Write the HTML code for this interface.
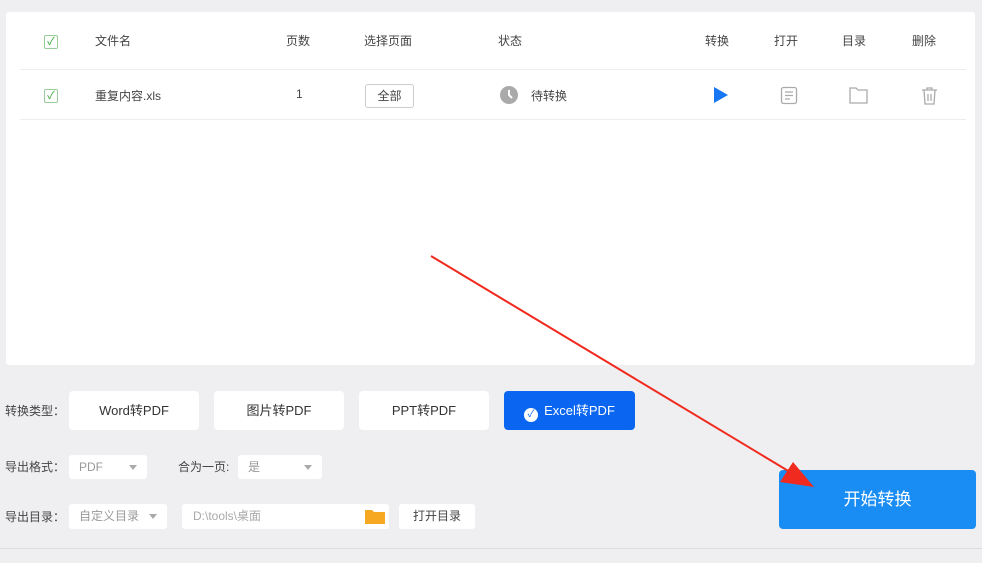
<!DOCTYPE html><html><head><meta charset="utf-8"><style>
body{margin:0;width:982px;height:563px;background:#efeff2;font-family:"Liberation Sans","Noto Sans CJK SC",sans-serif;position:relative;overflow:hidden;color:#333}
.a{position:absolute}
.panel{left:6px;top:12px;width:969px;height:353px;background:#fff;border-radius:3px}
.t{font-size:12px;color:#444;white-space:nowrap}
.cb{width:12px;height:12px;border:1px solid #9c9;border-radius:2px;color:#3a3;font-size:11px;line-height:12px;text-align:center}
.btn{background:#fff;border-radius:4px;font-size:13px;text-align:center;color:#333}
.sel{background:#fff;border-radius:3px;font-size:12px;color:#999}
.tri{position:absolute;right:10px;top:10px;border:4px solid transparent;border-top:5px solid #aaa}
</style></head><body>
<div class="a panel"></div>
<div class="a" style="left:20px;top:69px;width:946px;height:1px;background:#eee"></div>
<div class="a" style="left:20px;top:119px;width:946px;height:1px;background:#eee"></div>
<div class="a cb" style="left:44px;top:35px">✓</div>
<div class="a cb" style="left:44px;top:89px">✓</div>
<div class="a t" style="left:95px;top:32px">文件名</div>
<div class="a t" style="left:286px;top:32px">页数</div>
<div class="a t" style="left:364px;top:32px">选择页面</div>
<div class="a t" style="left:498px;top:32px">状态</div>
<div class="a t" style="left:705px;top:32px">转换</div>
<div class="a t" style="left:774px;top:32px">打开</div>
<div class="a t" style="left:842px;top:32px">目录</div>
<div class="a t" style="left:912px;top:32px">删除</div>
<div class="a t" style="left:95px;top:87px">重复内容.xls</div>
<div class="a t" style="left:296px;top:87px">1</div>
<div class="a t" style="left:365px;top:84px;width:47px;height:22px;border:1px solid #ccc;border-radius:3px;text-align:center;line-height:22px">全部</div>
<svg class="a" style="left:500px;top:86px" width="18" height="18"><circle cx="9" cy="9" r="9" fill="#aaa"/><path d="M9 4v5l3 3" stroke="#fff" stroke-width="2" fill="none"/></svg>
<div class="a t" style="left:531px;top:87px">待转换</div>
<svg class="a" style="left:712px;top:86px" width="18" height="18"><path d="M2 1L16 9L2 17Z" fill="#1676f3"/></svg>
<svg class="a" style="left:780px;top:86px" width="18" height="19"><rect x="1.5" y="1.5" width="15" height="16" rx="2" fill="none" stroke="#aaa" stroke-width="1.3"/><path d="M5 6h8M5 9.5h8M5 13h5" stroke="#aaa" stroke-width="1.3"/></svg>
<svg class="a" style="left:849px;top:86px" width="19" height="18"><path d="M1 2h6l2 2h9v13H1Z" fill="none" stroke="#aaa" stroke-width="1.3"/></svg>
<svg class="a" style="left:921px;top:86px" width="17" height="19"><path d="M1 4h15M6 4V2h5v2M3 4l1 14h9l1-14M7 8v7M10 8v7" fill="none" stroke="#aaa" stroke-width="1.3"/></svg>

<div class="a t" style="left:5px;top:402px">转换类型：</div>
<div class="a btn" style="left:69px;top:391px;width:130px;height:39px;line-height:39px">Word转PDF</div>
<div class="a btn" style="left:214px;top:391px;width:130px;height:39px;line-height:39px">图片转PDF</div>
<div class="a btn" style="left:359px;top:391px;width:130px;height:39px;line-height:39px">PPT转PDF</div>
<div class="a btn" style="left:504px;top:391px;width:131px;height:39px;line-height:39px;background:#0a66f0;color:#fff"><span style="display:inline-block;width:14px;height:14px;border-radius:50%;background:#fff;color:#0a66f0;font-size:10px;line-height:14px;vertical-align:-2px;margin-right:6px">✓</span>Excel转PDF</div>
<div class="a t" style="left:5px;top:458px">导出格式：</div>
<div class="a sel" style="left:69px;top:455px;width:78px;height:24px;line-height:24px"><span style="margin-left:10px">PDF</span><i class="tri"></i></div>
<div class="a t" style="left:178px;top:458px">合为一页:</div>
<div class="a sel" style="left:238px;top:455px;width:84px;height:24px;line-height:24px"><span style="margin-left:10px">是</span><i class="tri"></i></div>
<div class="a t" style="left:5px;top:508px">导出目录：</div>
<div class="a sel" style="left:69px;top:504px;width:98px;height:25px;line-height:25px"><span style="margin-left:10px">自定义目录</span><i class="tri"></i></div>
<div class="a sel" style="left:182px;top:504px;width:207px;height:25px;line-height:25px"><span style="margin-left:11px;color:#aaa">D:\tools\桌面</span></div>
<svg class="a" style="left:365px;top:509px" width="20" height="15"><path d="M0 1h7l2 2h11v12H0Z" fill="#f7a823"/></svg>
<div class="a sel" style="left:399px;top:504px;width:76px;height:25px;line-height:25px;text-align:center;color:#444">打开目录</div>
<div class="a" style="left:779px;top:470px;width:197px;height:59px;background:#1a8df5;border-radius:4px;color:#fff;font-size:17px;text-align:center;line-height:59px">开始转换</div>
<div class="a" style="left:0;top:548px;width:982px;height:1px;background:#ddd"></div>
<svg class="a" style="left:0;top:0" width="982" height="563"><line x1="431" y1="256" x2="795" y2="475" stroke="#f02a1e" stroke-width="2"/><path d="M814 487L780 482L793 462Z" fill="#f02a1e"/></svg>
</body></html>
